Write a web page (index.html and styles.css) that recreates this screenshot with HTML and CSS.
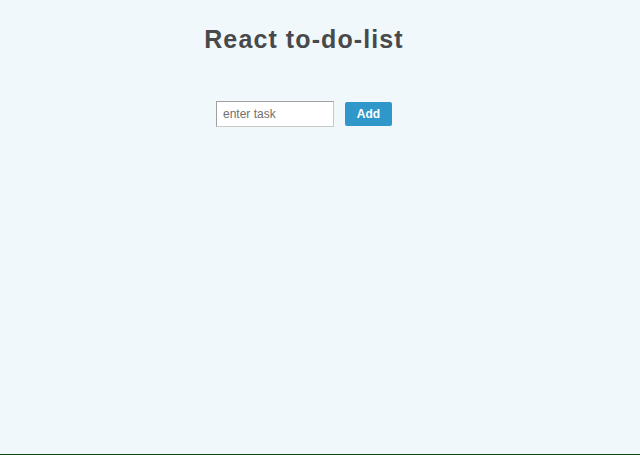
FILE: index.html
```html
<!DOCTYPE html>
<html lang="en">
<head>
<meta charset="utf-8">
<title>React to-do-list</title>
<link rel="stylesheet" href="styles.css">
</head>
<body>
<div class="app">
  <h1 class="title">React to-do-list</h1>
  <form class="task-form" onsubmit="return false">
    <input class="task-input" type="text" placeholder="enter task">
    <button class="add-btn" type="submit">Add</button>
  </form>
</div>
</body>
</html>
```
FILE: styles.css
```css
html, body {
  margin: 0;
  padding: 0;
  height: 100%;
}
body {
  background: #f0f8fc;
  font-family: "Liberation Sans", Arial, sans-serif;
  box-sizing: border-box;
  border-bottom: 1px solid #0b4d0b;
}
.app {
  width: 608px;
  display: flex;
  flex-direction: column;
  align-items: center;
}
.title {
  margin: 24px 0 0;
  font-size: 25px;
  letter-spacing: 1.1px;
  line-height: 30px;
  font-weight: bold;
  color: #48494b;
}
.task-form {
  margin-top: 47px;
  display: flex;
  align-items: center;
  gap: 11px;
}
.task-input {
  box-sizing: border-box;
  width: 118px;
  height: 26px;
  margin: 0;
  padding: 0 6px;
  border: 1px solid #c9c9c9;
  border-top-color: #a0a0a0;
  border-left-color: #a0a0a0;
  background: #fff;
  font-family: "Liberation Sans", Arial, sans-serif;
  font-size: 12px;
  color: #333;
  outline: none;
}
.task-input::placeholder {
  color: #6f6f6f;
}
.add-btn {
  box-sizing: border-box;
  width: 47px;
  height: 24px;
  margin: 0;
  padding: 0;
  border: none;
  border-radius: 2px;
  background: #3097cb;
  color: #fff;
  font-family: "Liberation Sans", Arial, sans-serif;
  font-size: 12px;
  font-weight: bold;
}
```
